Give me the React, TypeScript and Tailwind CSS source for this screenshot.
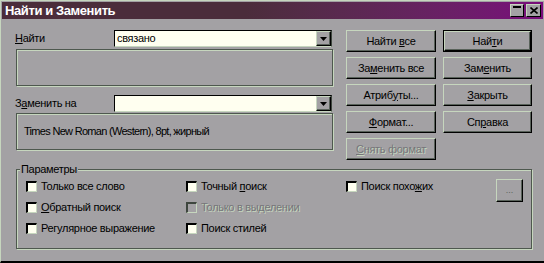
import React from "react";

const font = { fontFamily: '"Liberation Sans", Arial, sans-serif' };

function U({ children }: { children: React.ReactNode }) {
  return <span className="underline underline-offset-[1px]">{children}</span>;
}

function Btn({
  children,
  def,
  disabled,
}: {
  children: React.ReactNode;
  def?: boolean;
  disabled?: boolean;
}) {
  const inner = (
    <div
      className={
        "flex h-full w-full items-center justify-center border border-t-[#c6d6be] border-l-[#c6d6be] border-r-black border-b-black shadow-[inset_-1px_-1px_0_#59625a] text-[11px] leading-none tracking-[-0.3px] " +
        (disabled
          ? "text-[#76767a] [text-shadow:1px_1px_0_#c6d6be]"
          : "text-black")
      }
    >
      {children}
    </div>
  );
  if (def)
    return <div className="h-[22px] w-full border border-black">{inner}</div>;
  return <div className="h-[22px] w-full">{inner}</div>;
}

function Check({
  children,
  disabled,
}: {
  children: React.ReactNode;
  disabled?: boolean;
}) {
  return (
    <div className="flex h-[21px] items-center gap-[4px]">
      <div
        className={
          "h-[11px] w-[11px] border-t-2 border-l-2 border-r border-b border-r-[#c6d6be] border-b-[#c6d6be] " +
          (disabled
            ? "bg-[#a3a1a4] border-t-[#3e463e] border-l-[#3e463e]"
            : "bg-[#fffff0] border-t-black border-l-black")
        }
      />
      <span
        className={
          "text-[11px] leading-none whitespace-nowrap tracking-[-0.3px] " +
          (disabled
            ? "text-[#76767a] [text-shadow:1px_1px_0_#c6d6be]"
            : "text-black")
        }
      >
        {children}
      </span>
    </div>
  );
}

function Combo({ value }: { value?: string }) {
  return (
    <div className="flex h-[17px] w-[218px] border border-t-black border-l-black border-r-[#3e463e] border-b-[#c6d6be] bg-[#fffff0]">
      <div className="flex-1 pl-[2px] text-[11px] leading-[15px] tracking-[-0.3px] text-black">
        {value}
      </div>
      <div className="flex h-full w-[15px] items-center justify-center border border-t-[#c6d6be] border-l-[#c6d6be] border-r-black border-b-black bg-[#a3a1a4] shadow-[inset_-1px_-1px_0_#59625a]">
        <svg width="7" height="4" viewBox="0 0 7 4">
          <polygon points="0,0 7,0 3.5,4" fill="#000" />
        </svg>
      </div>
    </div>
  );
}

export default function App() {
  return (
    <div
      className="h-[263px] w-[544px] overflow-hidden bg-[#a3a1a4] border-t border-l border-[#c6d6be] border-b-2 border-b-black p-[1px]"
      style={font}
    >
      {/* Title bar */}
      <div className="flex h-[17px] items-center justify-between bg-linear-to-r from-[#4b2d3b] from-45% to-[#790c7b] pl-[3px] pr-[2px]">
        <span className="text-[13px] font-bold leading-none tracking-[-0.4px] text-white">
          Найти и Заменить
        </span>
        <div className="flex gap-[2px]">
          <div className="flex h-[13px] w-[14px] items-start justify-center border border-t-[#c6d6be] border-l-[#c6d6be] border-r-black border-b-black bg-[#a3a1a4] pt-[1px]">
            <div className="h-[2px] w-[8px] bg-black" />
          </div>
          <div className="flex h-[13px] w-[15px] items-center justify-center border border-t-[#c6d6be] border-l-[#c6d6be] border-r-black border-b-black bg-[#a3a1a4]">
            <svg width="8" height="7" viewBox="0 0 8 7">
              <path d="M0.5 0.5 L7.5 6.5 M7.5 0.5 L0.5 6.5" stroke="#000" strokeWidth="1.6" />
            </svg>
          </div>
        </div>
      </div>

      {/* Main */}
      <div className="flex pl-[13px] pt-[11px]">
        <div className="w-[318px]">
          <div className="flex items-center">
            <div className="w-[99px] text-[11px] leading-none tracking-[-0.3px] text-black">
              <U>Н</U>айти
            </div>
            <Combo value="связано" />
          </div>
          <div className="ml-[1px] mt-[2px] h-[37px] w-[317px] border border-[#4e584e] shadow-[inset_1px_1px_0_#c6d6be,1px_1px_0_#c6d6be]" />
          <div className="mt-[9px] flex items-center">
            <div className="w-[99px] text-[11px] leading-none tracking-[-0.3px] text-black">
              З<U>а</U>менить на
            </div>
            <Combo />
          </div>
          <div className="ml-[1px] mt-[1px] flex h-[37px] w-[317px] items-center border border-[#4e584e] pl-[7px] shadow-[inset_1px_1px_0_#c6d6be,1px_1px_0_#c6d6be]">
            <span className="text-[11px] leading-none tracking-[-0.7px] text-black">
              Times New Roman (Western), 8pt, жирный
            </span>
          </div>
        </div>

        <div className="ml-[13px] flex w-[90px] flex-col gap-[5px]">
          <Btn>
            Найти&nbsp;<U>в</U>се
          </Btn>
          <Btn>
            За<U>м</U>енить все
          </Btn>
          <Btn>
            Атриб<U>у</U>ты...
          </Btn>
          <Btn>
            <U>Ф</U>ормат...
          </Btn>
          <Btn disabled>
            <U>С</U>нять формат
          </Btn>
        </div>

        <div className="ml-[7px] flex w-[89px] flex-col gap-[5px]">
          <Btn def>
            Най<U>т</U>и
          </Btn>
          <Btn>
            Зам<U>е</U>нить
          </Btn>
          <Btn>
            <U>З</U>акрыть
          </Btn>
          <Btn>
            Сп<U>р</U>авка
          </Btn>
        </div>
      </div>

      {/* Parameters group */}
      <div className="relative ml-[14px] mt-[9px] h-[80px] w-[516px] border border-[#4e584e] shadow-[inset_1px_1px_0_#c6d6be,1px_1px_0_#c6d6be]">
        <span className="absolute -top-[7px] left-[3px] bg-[#a3a1a4] px-[1px] text-[11px] leading-[13px] tracking-[-0.3px] text-black">
          Параметры
        </span>
        <div className="flex pl-[9px] pt-[6px]">
          <div className="grid w-[470px] grid-cols-[160px_160px_150px]">
            <Check>Только все слово</Check>
            <Check>
              Точный <U>п</U>оиск
            </Check>
            <Check>
              Поиск похо<U>ж</U>их
            </Check>
            <Check>
              <U>О</U>братный поиск
            </Check>
            <Check disabled>Только в выделении</Check>
            <div />
            <Check>Регулярное выражение</Check>
            <Check>Поиск стилей</Check>
            <div />
          </div>
          <div className="mt-[3px] h-[23px] w-[27px]">
            <div className="flex h-full w-full items-center justify-center border border-t-[#c6d6be] border-l-[#c6d6be] border-r-black border-b-black shadow-[inset_-1px_-1px_0_#59625a] text-[9px] leading-none text-[#59625a]">
              ...
            </div>
          </div>
        </div>
      </div>
    </div>
  );
}
